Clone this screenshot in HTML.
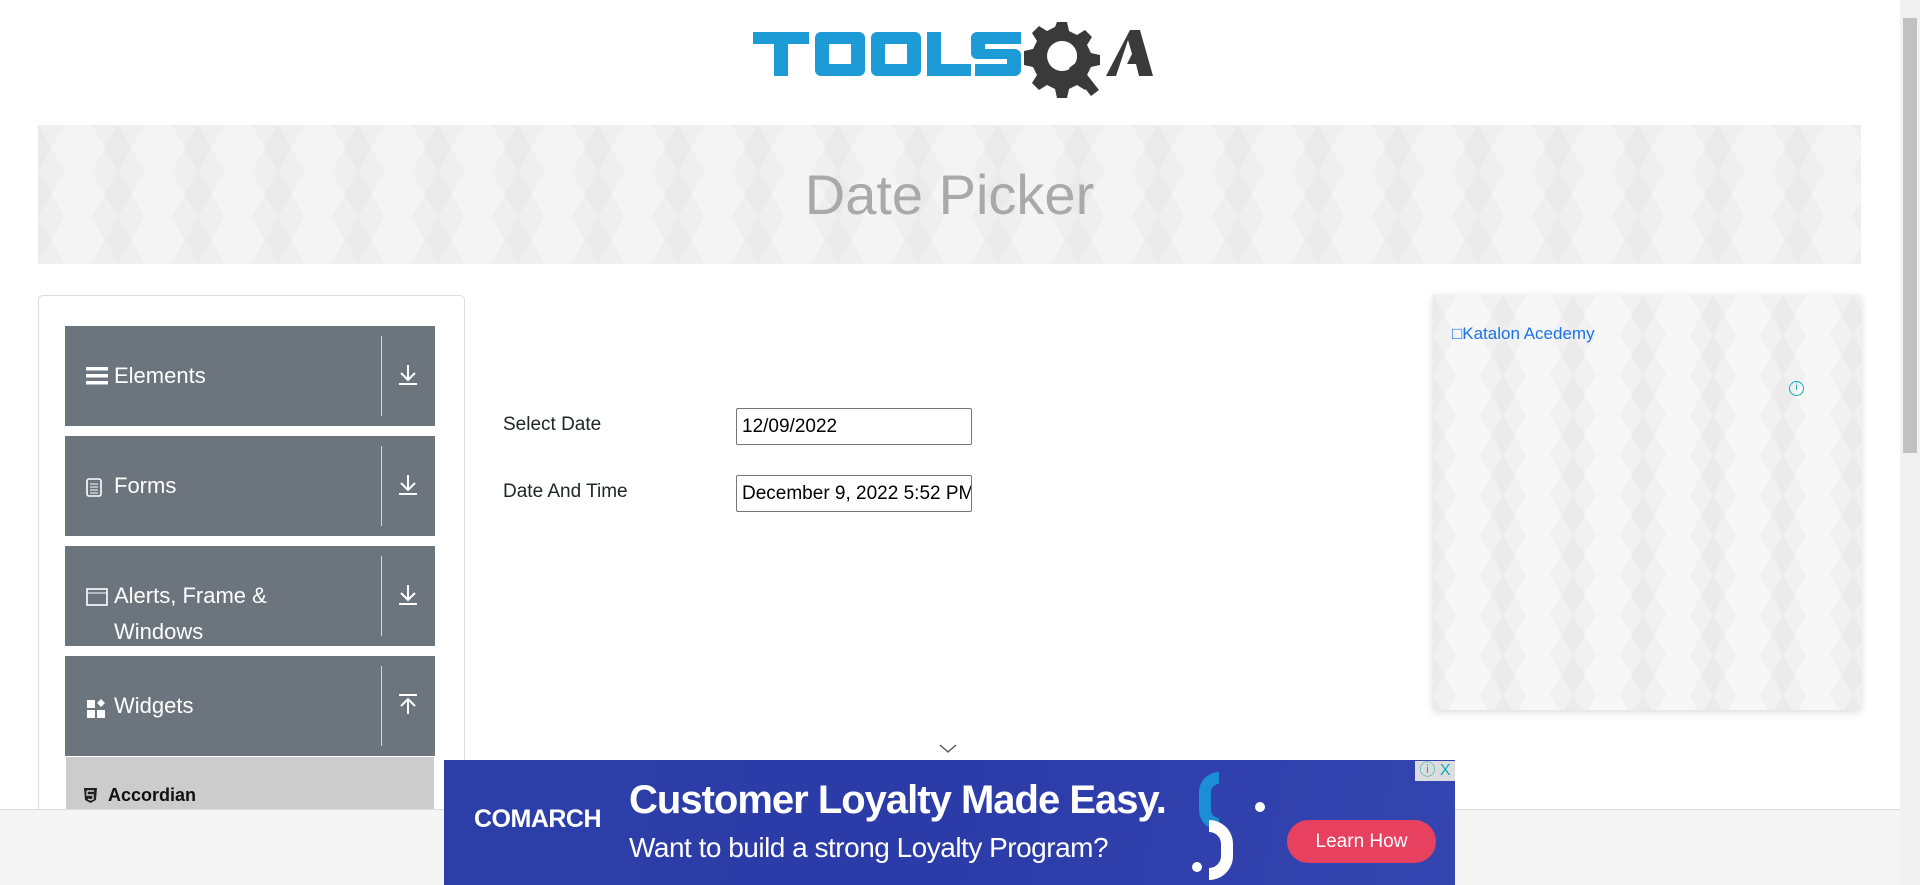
<!DOCTYPE html>
<html><head><meta charset="utf-8"><style>
*{box-sizing:border-box;margin:0;padding:0}
html,body{width:1920px;height:885px;overflow:hidden}
body{background:#fff;font-family:"Liberation Sans",sans-serif;position:relative}
.abs{position:absolute}
.hdr{left:38px;top:125px;width:1823px;height:139px;background:#f4f4f4;
background-image:linear-gradient(60deg,rgba(0,0,0,0.02) 25%,transparent 25%,transparent 75%,rgba(0,0,0,0.02) 75%),linear-gradient(-60deg,rgba(0,0,0,0.02) 25%,transparent 25%,transparent 75%,rgba(0,0,0,0.02) 75%);background-size:80px 46px}
.title{left:0;width:1899px;top:162px;text-align:center;font-size:56px;color:#a9a9a9;font-weight:300}
.card{left:38px;top:295px;width:427px;height:620px;border:1px solid #dcdcdc;border-radius:5px}
.item{left:65px;width:370px;height:100px;background:#6c757d;color:#fff;font-size:22px}
.item .t{position:absolute;left:49px;line-height:36px}
.item .d{position:absolute;left:316px;top:10px;width:1px;height:80px;background:#d8d8d8}
.item .a{position:absolute;left:332px;top:36px;width:22px;height:26px}
.item .ic{position:absolute;left:21px;top:40px}
.lbl{left:503px;font-size:19px;color:#212529}
.inp{left:736px;width:236px;height:37px;border:1px solid #767676;border-radius:2px;font-size:19px;padding:7px 0 0 5px;color:#000;white-space:nowrap;overflow:hidden}
.ad{left:1433px;top:295px;width:428px;height:415px;background:#f7f7f7;box-shadow:0 2px 8px rgba(0,0,0,.15);
background-image:linear-gradient(60deg,rgba(0,0,0,0.025) 25%,transparent 25%,transparent 75%,rgba(0,0,0,0.025) 75%),linear-gradient(-60deg,rgba(0,0,0,0.025) 25%,transparent 25%,transparent 75%,rgba(0,0,0,0.025) 75%);background-size:70px 40px}
</style></head><body>
<svg class="abs" style="left:751px;top:18px" width="402" height="94" viewBox="0 0 402 94">
<g fill="#1c9bd6" fill-rule="evenodd">
<path d="M2 14h56v12H37v32H23V26H2z"/>
<path d="M70 14h38a6 6 0 0 1 6 6v32a6 6 0 0 1-6 6H70a6 6 0 0 1-6-6V20a6 6 0 0 1 6-6zM78 26v20h22V26z"/>
<path d="M126 14h38a6 6 0 0 1 6 6v32a6 6 0 0 1-6 6h-38a6 6 0 0 1-6-6V20a6 6 0 0 1 6-6zM134 26v20h22V26z"/>
<path d="M176 14h14v32h30v12h-44z"/>
<path d="M230 14h40v12h-36v5h30a6 6 0 0 1 6 6v15a6 6 0 0 1-6 6h-40v-12h32v-5h-30a6 6 0 0 1-6-6V20a6 6 0 0 1 6-6z"/>
</g>
<g fill="#3a3a3a">
<path d="M306 4l10 0 2 9 8 4 8-5 7 7-5 8 4 8 9 2v10l-9 2-4 8 5 8-7 7-8-5-8 4-2 9h-10l-2-9-8-4-8 5-7-7 5-8-4-8-9-2V33l9-2 4-8-5-8 7-7 8 5 8-4zM311 23a15 15 0 1 0 .1 0z" fill-rule="evenodd"/>
<path d="M318 50l8-6 22 28-8 6z"/>
<path d="M355 58l24-46h10l13 46h-14l-3-12h-9l5-10-4-14-12 36z"/>
</g>
</svg>
<div class="abs hdr"></div>
<div class="abs title">Date Picker</div>
<div class="abs card"></div>
<div class="abs item" style="top:326px"><svg class="ic" width="22" height="20" viewBox="0 0 22 20" style="top:40px"><rect y="1" width="22" height="3.5" fill="#fff"/><rect y="8" width="22" height="3.5" fill="#fff"/><rect y="15" width="22" height="3.5" fill="#fff"/></svg><span class="t" style="top:32px">Elements</span><div class="d"></div><svg class="a" viewBox="0 0 22 26"><path d="M11 3v15M4 11l7 7 7-7M2 22h18" stroke="#fff" stroke-width="2" fill="none"/></svg></div>
<div class="abs item" style="top:436px"><svg class="ic" width="16" height="20" viewBox="0 0 16 20" style="top:42px"><rect x="1" y="1" width="14" height="17" rx="2" fill="none" stroke="#fff" stroke-width="1.6"/><path d="M4 6h8M4 9h8M4 12h8M4 15h8" stroke="#fff"/></svg><span class="t" style="top:32px">Forms</span><div class="d"></div><svg class="a" viewBox="0 0 22 26"><path d="M11 3v15M4 11l7 7 7-7M2 22h18" stroke="#fff" stroke-width="2" fill="none"/></svg></div>
<div class="abs item" style="top:546px"><svg class="ic" width="22" height="18" viewBox="0 0 22 18" style="top:42px"><rect x="1" y="1" width="20" height="16" fill="none" stroke="#fff" stroke-width="1.6"/><path d="M1 5h20" stroke="#fff"/></svg><span class="t" style="top:32px">Alerts, Frame &amp;<br>Windows</span><div class="d"></div><svg class="a" viewBox="0 0 22 26"><path d="M11 3v15M4 11l7 7 7-7M2 22h18" stroke="#fff" stroke-width="2" fill="none"/></svg></div>
<div class="abs item" style="top:656px"><svg class="ic" width="20" height="20" viewBox="0 0 20 20" style="top:42px"><rect x="1" y="2" width="8" height="8" fill="#fff"/><rect x="1" y="12" width="8" height="8" fill="#fff"/><rect x="11" y="12" width="8" height="8" fill="#fff"/><path d="M15 1l4 4-4 4-4-4z" fill="#fff"/></svg><span class="t" style="top:32px">Widgets</span><div class="d"></div><svg class="a" viewBox="0 0 22 26"><path d="M11 22V7M4 14l7-7 7 7M2 3h18" stroke="#fff" stroke-width="2" fill="none"/></svg></div>
<div class="abs" style="left:66px;top:757px;width:368px;height:60px;background:#ccc"></div>
<svg class="abs" style="left:84px;top:788px" width="13" height="15" viewBox="0 0 13 15"><path d="M0 0h13l-1 12-5.5 3L1 12z" fill="#222"/><path d="M3 3h7M3 3v4h6v4l-2.5 1L4 11" stroke="#ccc" stroke-width="1.4" fill="none"/></svg>
<div class="abs" style="left:108px;top:785px;font-size:18px;font-weight:bold;color:#111">Accordian</div>
<div class="abs lbl" style="top:414px">Select Date</div>
<div class="abs inp" style="top:408px">12/09/2022</div>
<div class="abs lbl" style="top:481px">Date And Time</div>
<div class="abs inp" style="top:475px">December 9, 2022 5:52 PM</div>
<div class="abs ad"></div>
<div class="abs" style="left:1452px;top:324px;font-size:17px;color:#1a73e8">&#9633;Katalon Acedemy</div>
<div class="abs" style="left:1789px;top:381px;width:15px;height:15px;border:1.5px solid #1ab;border-radius:50%;font-size:10px;color:#1ab;text-align:center;line-height:12px">i</div>
<div class="abs" style="left:0;top:809px;width:1900px;height:76px;background:#f5f5f5;border-top:1px solid #ddd"></div>
<svg class="abs" style="left:938px;top:743px" width="20" height="12" viewBox="0 0 20 12"><path d="M2 2l8 7 8-7" stroke="#555" stroke-width="1.4" fill="none"/></svg>
<div class="abs" style="left:444px;top:760px;width:1011px;height:125px;background:linear-gradient(100deg,#2c3fa8,#2b3ba8 50%,#3445b0);overflow:hidden">
<div class="abs" style="left:30px;top:45px;color:#fff;font-weight:bold;font-size:25px;letter-spacing:-0.5px">COMARCH</div>
<div class="abs" style="left:185px;top:18px;color:#fff;font-weight:bold;font-size:40px;letter-spacing:-1px">Customer Loyalty Made Easy.</div>
<div class="abs" style="left:185px;top:72px;color:#fff;font-size:28px;letter-spacing:-0.5px">Want to build a strong Loyalty Program?</div>
<div class="abs" style="left:755px;top:12px;height:58px;border:12px solid #1c8ed6;border-right:none;border-radius:30px 0 0 30px;width:20px"></div>
<div class="abs" style="left:765px;top:60px;width:24px;height:60px;border:12px solid #fff;border-left:none;border-radius:0 30px 30px 0"></div>
<div class="abs" style="left:811px;top:42px;width:10px;height:10px;background:#fff;border-radius:50%"></div>
<div class="abs" style="left:748px;top:102px;width:10px;height:10px;background:#fff;border-radius:50%"></div>
<div class="abs" style="left:843px;top:60px;width:149px;height:43px;background:#e8415f;border-radius:22px;color:#fff;font-size:19px;text-align:center;line-height:43px">Learn How</div>
<div class="abs" style="left:971px;top:1px;width:40px;height:20px;background:#ddd;color:#1ab;font-size:16px;line-height:20px;text-align:center">ⓘ X</div>
</div>
<div class="abs" style="left:1900px;top:0;width:20px;height:885px;background:#f1f1f1"></div>
<div class="abs" style="left:1903px;top:18px;width:14px;height:435px;background:#c1c1c1"></div>
</body></html>
